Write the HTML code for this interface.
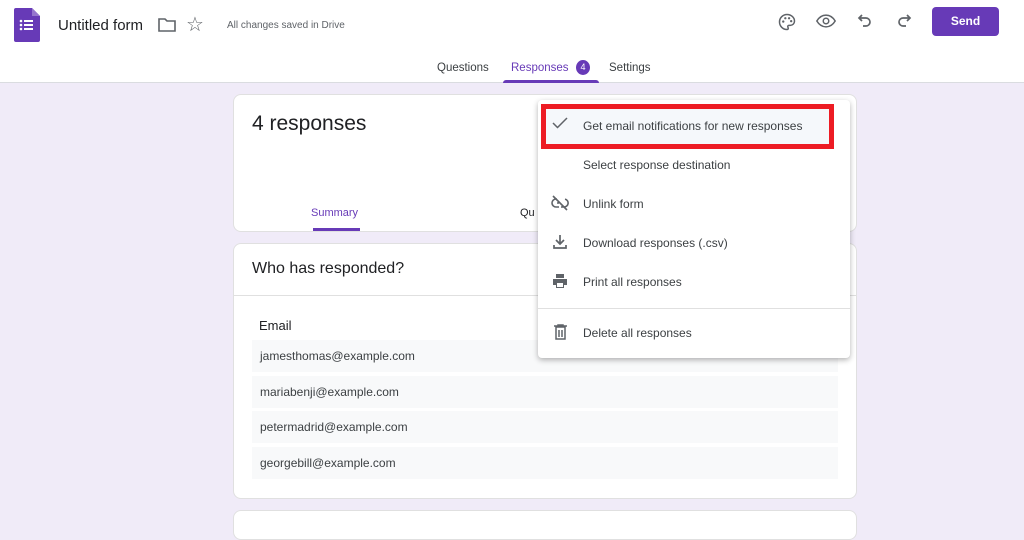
<!DOCTYPE html>
<html><head><style>
*{box-sizing:border-box;margin:0;padding:0}
body{width:1024px;height:525px;overflow:hidden;background:#f0ebf8;font-family:"Liberation Sans",sans-serif;color:#202124;position:relative}
.abs{position:absolute}
.hdr{left:0;top:0;width:1024px;height:83px;background:#fff;border-bottom:1px solid #dadce0}
.card{background:#fff;border-radius:8px;border:1px solid #e0e0e0}
.row{left:252px;width:586px;height:32px;background:#f8f9fa;font-size:12px;color:#3c4043;padding:9px 0 0 8px}
.mi{left:583px;font-size:12px;color:#3c4043}
svg.ic{position:absolute}
</style></head><body>
<div class="abs hdr"></div>
<svg class="ic" style="left:14px;top:8px" width="26" height="34" viewBox="0 0 26 34"><path d="M2 0h16l8 8v24a2 2 0 0 1-2 2H2a2 2 0 0 1-2-2V2a2 2 0 0 1 2-2z" fill="#673ab7"/><path d="M18 0v8h8z" fill="#9575cd"/><g fill="#fff"><circle cx="7" cy="13" r="1.3"/><circle cx="7" cy="17" r="1.3"/><circle cx="7" cy="21" r="1.3"/><rect x="10" y="12" width="9" height="2"/><rect x="10" y="16" width="9" height="2"/><rect x="10" y="20" width="9" height="2"/></g></svg>
<div class="abs" style="left:58px;top:17px;font-size:15px;color:#202124">Untitled form</div>
<svg class="ic" style="left:158px;top:17px" width="18" height="16" viewBox="0 0 18 16"><path d="M1 2h6l2 2h8v10H1z" fill="none" stroke="#5f6368" stroke-width="1.6"/></svg>
<div class="abs" style="left:186px;top:12px;font-size:20px;color:#5f6368">☆</div>
<div class="abs" style="left:227px;top:20px;font-size:10px;color:#5f6368">All changes saved in Drive</div>
<svg class="ic" style="left:777px;top:12px" width="20" height="20" viewBox="0 0 24 24"><path d="M12 3a9 9 0 0 0 0 18c1 0 1.5-.7 1.5-1.5 0-.8-.6-1.2-.6-2 0-.8.7-1.5 1.5-1.5H16a5 5 0 0 0 5-5c0-4.4-4-8-9-8z" fill="none" stroke="#5f6368" stroke-width="1.8"/><g fill="#5f6368"><circle cx="7.5" cy="11.5" r="1.4"/><circle cx="10" cy="7.5" r="1.4"/><circle cx="14.5" cy="7.5" r="1.4"/><circle cx="17" cy="11" r="1.4"/></g></svg>
<svg class="ic" style="left:816px;top:13px" width="20" height="16" viewBox="0 0 24 16"><path d="M1 8c3-5 7-7 11-7s8 2 11 7c-3 5-7 7-11 7S4 13 1 8z" fill="none" stroke="#5f6368" stroke-width="1.8"/><circle cx="12" cy="8" r="3.3" fill="none" stroke="#5f6368" stroke-width="1.8"/></svg>
<svg class="ic" style="left:857px;top:13px" width="16" height="16" viewBox="0 0 16 16"><path d="M5 2L2 5l3 3M2 5h7a4 4 0 0 1 0 8H6" fill="none" stroke="#5f6368" stroke-width="1.7"/></svg>
<svg class="ic" style="left:896px;top:13px" width="16" height="16" viewBox="0 0 16 16"><path d="M11 2l3 3-3 3M14 5H7a4 4 0 0 0 0 8h3" fill="none" stroke="#5f6368" stroke-width="1.7"/></svg>
<div class="abs" style="left:932px;top:7px;width:67px;height:29px;background:#673ab7;border-radius:4px;color:#fff;font-size:12px;font-weight:bold;text-align:center;line-height:29px">Send</div>
<div class="abs" style="left:437px;top:62px;font-size:11.5px;color:#3c4043">Questions</div>
<div class="abs" style="left:511px;top:62px;font-size:11.5px;color:#673ab7">Responses</div>
<div class="abs" style="left:576px;top:60px;width:14px;height:15px;border-radius:50%;background:#673ab7;color:#fff;font-size:9px;text-align:center;line-height:15px">4</div>
<div class="abs" style="left:609px;top:62px;font-size:11.5px;color:#3c4043">Settings</div>
<div class="abs" style="left:503px;top:80px;width:96px;height:3px;background:#673ab7;border-radius:3px 3px 0 0"></div>

<div class="abs card" style="left:233px;top:94px;width:624px;height:138px"></div>
<div class="abs" style="left:252px;top:112px;font-size:21px;color:#202124">4 responses</div>
<div class="abs" style="left:311px;top:207px;font-size:11px;color:#673ab7">Summary</div>
<div class="abs" style="left:313px;top:228px;width:47px;height:3px;background:#673ab7"></div>
<div class="abs" style="left:520px;top:207px;font-size:11px;color:#202124">Qu</div>

<div class="abs card" style="left:233px;top:243px;width:624px;height:256px"></div>
<div class="abs" style="left:252px;top:260px;font-size:16px;color:#202124">Who has responded?</div>
<div class="abs" style="left:233px;top:295px;width:624px;height:1px;background:#e0e0e0"></div>
<div class="abs" style="left:259px;top:318px;font-size:13px;color:#202124">Email</div>
<div class="abs row" style="top:340px">jamesthomas@example.com</div>
<div class="abs row" style="top:376px">mariabenji@example.com</div>
<div class="abs row" style="top:411px">petermadrid@example.com</div>
<div class="abs row" style="top:447px">georgebill@example.com</div>
<div class="abs card" style="left:233px;top:510px;width:624px;height:30px"></div>

<div class="abs" style="left:538px;top:100px;width:312px;height:258px;background:#fff;border-radius:4px;box-shadow:0 2px 6px rgba(0,0,0,.3)"></div>
<div class="abs" style="left:541px;top:104px;width:293px;height:45px;border:5px solid #ed1c24;background:#f5f8fb"></div>
<svg class="ic" style="left:552px;top:117px" width="16" height="12" viewBox="0 0 16 12"><path d="M1 6l4.5 4.5L15 1" fill="none" stroke="#5f6368" stroke-width="1.5"/></svg>
<div class="abs mi" style="top:119px">Get email notifications for new responses</div>
<div class="abs mi" style="top:158px">Select response destination</div>
<svg class="ic" style="left:551px;top:195px" width="18" height="16" viewBox="0 0 18 16"><path d="M6 4H5a4 4 0 0 0 0 8h3M10 12h3a4 4 0 0 0 1-7.9M6 8h2M2 1l14 14" fill="none" stroke="#5f6368" stroke-width="1.6"/></svg>
<div class="abs mi" style="top:197px">Unlink form</div>
<svg class="ic" style="left:553px;top:234px" width="14" height="16" viewBox="0 0 14 16"><path d="M7 1v9M3 6l4 4 4-4M1 11v3h12v-3" fill="none" stroke="#5f6368" stroke-width="1.7"/></svg>
<div class="abs mi" style="top:236px">Download responses (.csv)</div>
<svg class="ic" style="left:552px;top:273px" width="16" height="16" viewBox="0 0 16 16"><path d="M4 1h8v4H4z" fill="#5f6368"/><path d="M1 6h14v6h-3v3H4v-3H1z" fill="#5f6368"/><rect x="5" y="10" width="6" height="4" fill="#fff"/></svg>
<div class="abs mi" style="top:275px">Print all responses</div>
<div class="abs" style="left:538px;top:308px;width:312px;height:1px;background:#e0e0e0"></div>
<svg class="ic" style="left:554px;top:324px" width="13" height="16" viewBox="0 0 13 16"><path d="M0 2h13M4 2V1h5v1M2 3h9v12H2zM5 6v7M8 6v7" fill="none" stroke="#5f6368" stroke-width="1.5"/></svg>
<div class="abs mi" style="top:326px">Delete all responses</div>
</body></html>
